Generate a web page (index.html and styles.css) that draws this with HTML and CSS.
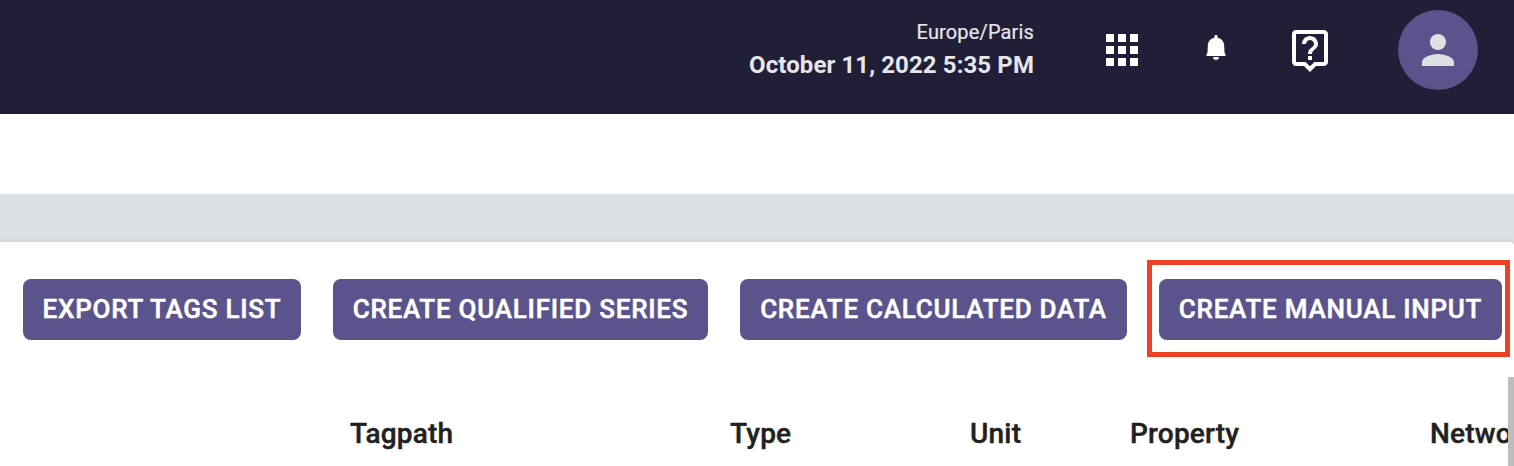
FILE: index.html
```html
<!DOCTYPE html>
<html lang="en">
<head>
  <meta charset="UTF-8">
  <title>Tags</title>
  <link rel="stylesheet" href="styles.css">
</head>
<body>
  <!-- Top bar -->
  <header class="topbar">
    <div class="clock">
      <div class="timezone">Europe/Paris</div>
      <div class="date">October 11, 2022 5:35 PM</div>
    </div>
    <svg class="icon apps" viewBox="0 0 24 24"><path d="M4 8h4V4H4v4zm6 12h4v-4h-4v4zm-6 0h4v-4H4v4zm0-6h4v-4H4v4zm6 0h4v-4h-4v4zm6-10v4h4V4h-4zm-6 4h4V4h-4v4zm6 6h4v-4h-4v4zm0 6h4v-4h-4v4z"/></svg>
    <svg class="bell" viewBox="0 0 20 26"><path d="M10 0c1 0 1.600.7 1.600 1.600v1.200c4 .8 6.600 3.900 6.600 8.200l.3 6.500 1.100 2.500v1H.4v-1l1.100-2.500.3-6.500c0-4.300 2.600-7.400 6.600-8.200V1.600C8.400.7 9 0 10 0zM7 22h6c0 1.700-1.300 3-3 3s-3-1.300-3-3z"/></svg>
    <svg class="icon help" viewBox="0 0 24 24"><path d="M19 2H5c-1.110 0-2 .9-2 2v14c0 1.100.89 2 2 2h4l3 3 3-3h4c1.100 0 2-.9 2-2V4c0-1.100-.9-2-2-2zm0 16h-4.830l-.59.59L12 20.170l-1.590-1.590-.58-.58H5V4h14v14zm-8-3h2v2h-2zm1-8c1.100 0 2 .9 2 2 0 2-3 1.750-3 5h2c0-2.250 3-2.500 3-5 0-2.210-1.790-4-4-4s-4 1.790-4 4h2c0-1.100.9-2 2-2z"/></svg>
    <div class="avatar">
      <svg class="icon" viewBox="0 0 24 24"><path d="M12 12c2.210 0 4-1.790 4-4s-1.790-4-4-4-4 1.790-4 4 1.790 4 4 4zm0 2c-2.670 0-8 1.340-8 4v2h16v-2c0-2.660-5.330-4-8-4z"/></svg>
    </div>
  </header>

  <div class="subbar"></div>

  <main class="content">
    <section class="panel">
      <div class="actions">
        <button class="btn export">EXPORT TAGS LIST</button>
        <button class="btn qualified">CREATE QUALIFIED SERIES</button>
        <button class="btn calculated">CREATE CALCULATED DATA</button>
        <div class="highlight">
          <button class="btn manual">CREATE MANUAL INPUT</button>
        </div>
      </div>

      <!-- Tags table -->
      <div class="tags">
        <div class="tags-head">
          <span></span>
          <span>Tagpath</span>
          <span>Type</span>
          <span>Unit</span>
          <span>Property</span>
          <span>Network</span>
        </div>
        <div class="scrollbar"></div>
      </div>
    </section>
  </main>
</body>
</html>
```

FILE: styles.css
```css
* {
  box-sizing: border-box;
}
body {
  margin: 0;
  height: 466px;
  overflow: hidden;
  font-family: Roboto, sans-serif;
  background: #fff;
  color: #212121;
}
.topbar {
  display: flex;
  align-items: flex-start;
  height: 114px;
  padding: 10px 36px 0 0;
  background: #211e38;
}
.clock {
  margin-left: auto;
  padding-top: 8px;
  text-align: right;
  white-space: nowrap;
  color: #e6e6ec;
}
.timezone {
  font-size: 20px;
  line-height: 28px;
  letter-spacing: 0.15px;
  -webkit-text-stroke: 0.2px;
}
.date {
  margin-top: 2px;
  font-size: 24px;
  line-height: 34px;
  font-weight: 700;
  letter-spacing: 0.1px;
}
.icon {
  display: block;
  width: 48px;
  height: 48px;
  fill: #fff;
}
.apps {
  margin: 16px 0 0 64px;
}
.bell {
  width: 20px;
  height: 26px;
  margin: 25px 0 0 60px;
  fill: #fff;
}
.help {
  margin: 16px 0 0 60px;
}
.avatar {
  width: 80px;
  height: 80px;
  margin-left: 64px;
  padding: 16px;
  border-radius: 50%;
  background: #5a538c;
}
.avatar .icon {
  fill: #dde1e4;
}
.subbar {
  height: 80px;
}
.content {
  height: 272px;
  padding-top: 48px;
  background: #dde1e4;
}
.panel {
  height: 224px;
  border-radius: 0 4px 0 0;
  background: #fff;
  box-shadow: 0 0 4px rgba(0, 0, 0, 0.1);
}
.actions {
  display: flex;
  align-items: flex-start;
  height: 135px;
  padding: 18px 4px 0 23px;
}
.btn {
  height: 61px;
  margin: 19px 32px 0 0;
  padding: 0 0 2px;
  border: none;
  border-radius: 8px;
  background: #5a538c;
  color: #fff;
  font-family: inherit;
  font-size: 26px;
  font-weight: 500;
  letter-spacing: 0.75px;
  white-space: nowrap;
  -webkit-text-stroke: 0.5px;
}
.export {
  width: 278px;
}
.qualified {
  width: 375px;
}
.calculated {
  width: 387px;
  margin-right: 20px;
}
.highlight {
  width: 363px;
  height: 97px;
  padding: 14px 0 0 7px;
  border: 5px solid #ed4026;
}
.manual {
  width: 343px;
  margin: 0;
}
.tags {
  display: flex;
  height: 89px;
}
.tags-head {
  display: grid;
  grid-template-columns: 350px 380px 240px 160px 300px 1fr;
  flex: 1;
  min-width: 0;
  padding-top: 40px;
  overflow: hidden;
  font-size: 28px;
  line-height: 34px;
  font-weight: 500;
  letter-spacing: 0.2px;
  -webkit-text-stroke: 0.4px;
}
.tags-head span {
  min-width: 0;
}
.scrollbar {
  width: 6px;
  background: #bdbdbd;
}
```
